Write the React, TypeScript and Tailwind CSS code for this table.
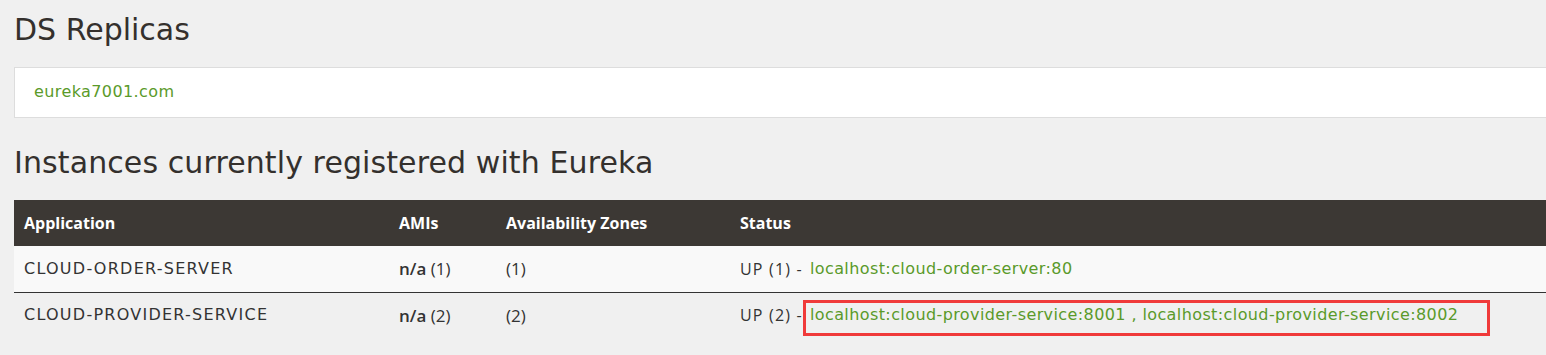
export default function App() {
  const body = { fontFamily: "'Open Sans', 'Noto Sans', sans-serif" };
  const wide = { fontFamily: "'DejaVu Sans', 'Open Sans', sans-serif" };
  return (
    <div className="min-h-[355px] w-full overflow-hidden bg-[#f0f0f0] pl-[14px] text-[#333]">
      <h1 className="pt-[12px] text-[30px] leading-[36px] text-[#34302d]" style={wide}>
        DS Replicas
      </h1>
      <ul className="mt-[19px] w-[1600px] border border-[#ddd] bg-white px-[19px] pt-[12px] pb-[14px]" style={wide}>
        <li className="text-[16px] leading-[23px] tracking-[0.4px] text-[#5a9a2a]">
          <a href="#">eureka7001.com</a>
        </li>
      </ul>
      <h2 className="mt-[27px] text-[30px] leading-[36px] tracking-[0.1px] text-[#34302d]" style={wide}>
        Instances currently registered with Eureka
      </h2>
      <table className="mt-[19px] w-[1600px] border-collapse text-left text-[16px]" style={body}>
        <thead>
          <tr className="h-[46px] bg-[#3c3834] text-white">
            <th className="w-[375px] px-[10px] font-bold">Application</th>
            <th className="w-[107px] px-[10px] font-bold">AMIs</th>
            <th className="w-[234px] px-[10px] font-bold">Availability Zones</th>
            <th className="px-[10px] font-bold">Status</th>
          </tr>
        </thead>
        <tbody>
          <tr className="h-[46px] border-b border-[#333] bg-[#f9f9f9]">
            <td className="px-[10px] tracking-[1.25px]" style={wide}>
              CLOUD-ORDER-SERVER
            </td>
            <td className="px-[10px] text-[17px]">
              <b className="font-semibold">n/a</b> (1)
            </td>
            <td className="px-[10px] text-[17px]">(1)</td>
            <td className="px-[10px]">
              <div className="flex items-center">
                <span className="tracking-[1.2px]">UP (1) -</span>
                <a href="#" className="ml-[7px] tracking-[0.4px] text-[#5a9a2a]" style={wide}>
                  localhost:cloud-order-server:80
                </a>
              </div>
            </td>
          </tr>
          <tr className="h-[46px]">
            <td className="px-[10px] tracking-[1.25px]" style={wide}>
              CLOUD-PROVIDER-SERVICE
            </td>
            <td className="px-[10px] text-[17px]">
              <b className="font-semibold">n/a</b> (2)
            </td>
            <td className="px-[10px] text-[17px]">(2)</td>
            <td className="px-[10px]">
              <div className="flex items-center">
                <span className="tracking-[1.2px]">UP (2) -</span>
                <span className="relative ml-[7px] tracking-[0.4px] text-[#5a9a2a]" style={wide}>
                  <a href="#">localhost:cloud-provider-service:8001</a> ,{" "}
                  <a href="#">localhost:cloud-provider-service:8002</a>
                  <span className="pointer-events-none absolute -top-[3px] -left-[7px] h-[36px] w-[687px] border-[3px] border-[#f03a3a]" />
                </span>
              </div>
            </td>
          </tr>
        </tbody>
      </table>
    </div>
  );
}
